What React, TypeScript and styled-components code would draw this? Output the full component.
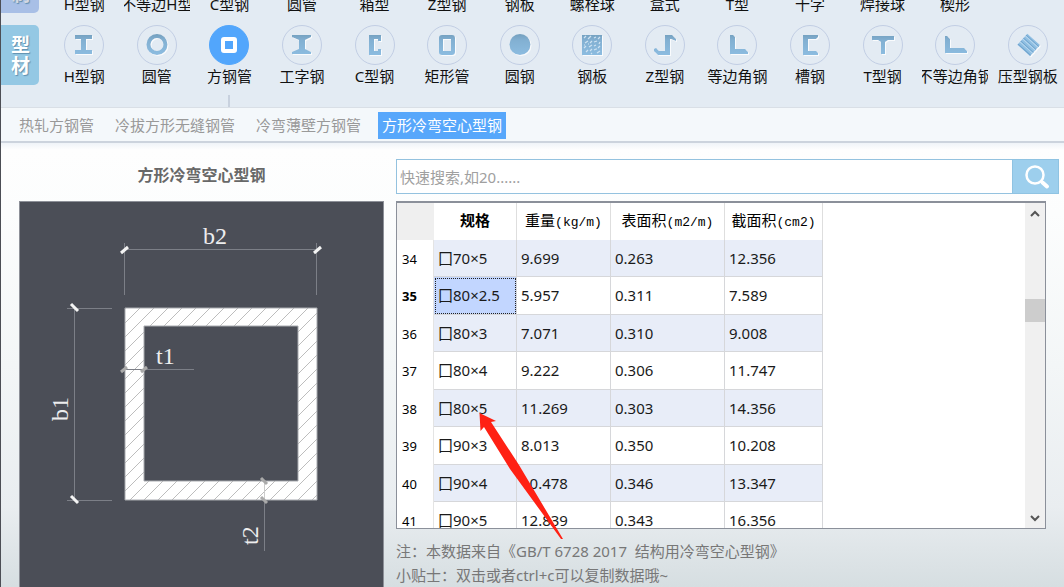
import React from "react";
import styled, { createGlobalStyle, css } from "styled-components";

const uiFont = `"Noto Sans", "Noto Sans CJK SC", sans-serif`;
const monoFont = `"Liberation Mono", "Noto Sans CJK SC", monospace`;

const GlobalStyle = createGlobalStyle`
  * { box-sizing: border-box; }
  body { margin: 0; font-family: ${uiFont}; font-size: 15px; color: #1a1a1a; }
  button, input { font: inherit; color: inherit; }
  button { border: 0; padding: 0; background: none; cursor: pointer; }
`;

const Window = styled.main`
  display: flex;
  flex-direction: column;
  height: 100vh;
  overflow: hidden;
  border-left: 1px solid #4c4e55;
`;

const Nav = styled.nav`
  display: flex;
  flex-direction: column;
  justify-content: flex-end;
  gap: 8px;
  flex: none;
  height: 107px;
  padding-bottom: 18px;
  overflow: hidden;
  background: #e3ebf3;
`;

const NavRow = styled.section`
  display: flex;
  flex: none;
  gap: 9px;
  height: 64px;
`;

const Category = styled.h2<{ $tone: string; $ink: string }>`
  display: flex;
  align-items: center;
  justify-content: center;
  flex: none;
  width: 38px;
  height: 60px;
  margin: 0;
  padding: 1px 8px 0 10px;
  border-radius: 0 5px 5px 0;
  background: ${(p) => p.$tone};
  color: ${(p) => p.$ink};
  font-size: 19px;
  font-weight: 700;
  line-height: 21px;
  text-shadow: 1px 1px 1px #5f8fae;
`;

const Items = styled.div`
  display: grid;
  grid-template-columns: repeat(14, minmax(0, 1fr));
  flex: 1;
  min-width: 0;
`;

const Item = styled.button`
  display: flex;
  position: relative;
  flex-direction: column;
  align-items: center;
  color: #111;
`;

const Circle = styled.span<{ $active?: boolean }>`
  display: flex;
  align-items: center;
  justify-content: center;
  flex: none;
  width: 40px;
  height: 40px;
  border: 1px solid ${(p) => (p.$active ? "#52a6fc" : "#c2cee4")};
  border-radius: 50%;
  background: ${(p) => (p.$active ? "#52a6fc" : "transparent")};
`;

const ItemLabel = styled.span`
  display: flex;
  justify-content: center;
  width: 66px;
  line-height: 22px;
  white-space: nowrap;
  overflow: hidden;
`;

const Pointer = styled.i`
  position: absolute;
  top: 70px;
  left: 50%;
  width: 2px;
  height: 12px;
  margin-left: -1px;
  background: #c8d1de;
`;

const Tabs = styled.div`
  display: flex;
  align-items: center;
  flex: none;
  gap: 13px;
  height: 36px;
  padding: 2px 0 0 14px;
  border-top: 1px solid #d9dfe6;
  border-bottom: 2px solid #ccd3dd;
  background: #f4f8fb;
`;

const Tab = styled.button<{ $active?: boolean }>`
  height: 27px;
  padding: 0 4px;
  color: #999;
  line-height: 27px;
  white-space: nowrap;
  ${(p) =>
    p.$active &&
    css`
      background: #57a7fb;
      color: #fff;
    `}
`;

const Content = styled.div`
  display: flex;
  flex: 1;
  gap: 12px;
  min-height: 0;
  padding: 0 5px 0 18px;
  background: linear-gradient(#eff3f8, #fefefe 7px, #fcfdfd 70px, #f3f6f7 50%, #e9edf0 82%, #d6dee1);
`;

const Preview = styled.section`
  display: flex;
  flex-direction: column;
  flex: 0 1 365px;
  min-width: 0;
`;

const PreviewTitle = styled.h1`
  flex: none;
  height: 58px;
  margin: 0;
  padding-top: 20px;
  color: #686868;
  font-size: 16px;
  font-weight: 700;
  line-height: 24px;
  text-align: center;
`;

const Drawing = styled.figure`
  flex: 1;
  min-height: 0;
  margin: 0;
  overflow: hidden;
  border: solid #8d9098;
  border-width: 1px 1px 0;
  background: #4b4e57;
  font-family: "Liberation Serif", serif;
`;

const Data = styled.section`
  display: flex;
  flex-direction: column;
  flex: 1;
  min-width: 0;
  padding-top: 16px;
`;

const Search = styled.form`
  display: flex;
  flex: none;
  height: 35px;
  margin-bottom: 7px;
`;

const SearchBox = styled.input`
  flex: 1;
  min-width: 0;
  padding: 0 3px;
  border: 1px solid #94c2df;
  border-right: 0;
  outline: 0;
  background: #fff;
  &::placeholder { color: #a0a0a0; opacity: 1; }
`;

const SearchButton = styled.button`
  display: flex;
  align-items: center;
  justify-content: center;
  width: 47px;
  padding-left: 2px;
  border: 1px solid #8fc3e2;
  background: #9dcfed;
`;

const GridArea = styled.div`
  display: flex;
  position: relative;
  flex: 1;
  min-height: 0;
  margin-right: 13px;
`;

const GridFrame = styled.div`
  display: flex;
  justify-content: space-between;
  flex: 1;
  overflow: hidden;
  border: 1px solid #8b909a;
  border-top-width: 2px;
  background: #fff;
`;

const Table = styled.table`
  align-self: flex-start;
  border-collapse: separate;
  border-spacing: 0;
  table-layout: fixed;
  width: 426px;
`;

const Row = styled.tr<{ $shaded?: boolean }>`
  height: ${(p) => (p.$shaded ? 37 : 38)}px;
  --fill: ${(p) => (p.$shaded ? "#e8edf8" : "#fff")};
`;

const Corner = styled.td`
  width: 37px;
  height: 37px;
  padding: 0;
  background: #efefef;
`;

const Head = styled.th<{ $width: number; $strong?: boolean }>`
  width: ${(p) => p.$width}px;
  height: 37px;
  padding: 3px 0 0;
  border-right: 1px solid #dedede;
  color: #000;
  font-family: ${monoFont};
  font-weight: ${(p) => (p.$strong ? 700 : 400)};
  line-height: 20px;
  white-space: nowrap;
`;

const Unit = styled.span`
  font-size: 13px;
`;

const RowHead = styled.th<{ $strong?: boolean }>`
  padding: 0 0 0 5px;
  border-right: 1px solid #e4e4e4;
  color: #000;
  font-size: 13px;
  font-weight: ${(p) => (p.$strong ? 700 : 400)};
  line-height: 20px;
  text-align: left;
`;

const Cell = styled.td<{ $selected?: boolean }>`
  padding: 0 0 1px 4px;
  border-right: 1px solid #d6d7da;
  border-bottom: 1px solid #d6d7da;
  background: var(--fill);
  line-height: 20px;
  white-space: nowrap;
  ${(p) =>
    p.$selected &&
    css`
      outline: 1px dotted #222;
      outline-offset: -2px;
      background: #c2d6ff;
    `}
`;

const Scrollbar = styled.div`
  display: flex;
  flex-direction: column;
  width: 20px;
  background: #f0f0f0;
`;

const ScrollButton = styled.button`
  display: flex;
  align-items: center;
  justify-content: center;
  flex: none;
  height: 21px;
`;

const Track = styled.div`
  flex: 1;
  padding-top: 75px;
`;

const Thumb = styled.div`
  height: 23px;
  background: #cdcdcd;
`;

const Arrow = styled.svg`
  position: absolute;
  top: 211px;
  left: 83px;
  pointer-events: none;
`;

const Notes = styled.footer`
  flex: none;
  padding-top: 10px;
  color: #777;
  line-height: 24px;
`;

const Note = styled.p`
  margin: 0;
  white-space: pre;
`;

const shapes: Record<string, React.ReactNode> = {
  hBeam: <path d="M4 5h17v4h-6v11h6v4H4v-4h6V9H4z" />,
  ring: <circle cx="13" cy="14.5" r="8.5" fill="none" stroke="url(#steel)" strokeWidth="4" />,
  iBeam: <path d="M3 5h19v2l-6 3v9l6 3v2H3v-2l7-3v-9L3 7z" />,
  cBeam: <path d="M7 5h12v6h-3V9h-4v12h4v-2h3v6H7z" />,
  rect: <rect x="7" y="7" width="12" height="16" rx="1" fill="none" stroke="url(#steel)" strokeWidth="4" />,
  disc: <circle cx="13" cy="14.5" r="10.5" />,
  plate: (
    <>
      <rect x="3" y="5" width="20" height="20" />
      <path
        d="M5 8l2-2M9 9l3-3M15 8l2-1M19 9l2-2M6 13l3-2M11 13l2-2M15 12l3-1M20 14l1-2M5 18l2-2M10 17l3-2M15 16l2-1M19 18l2-2M7 22l2-2M11 21l2-2M15 20l2-1M18 23l3-2M12 24l1-1M5 15h1M17 19h1M9 14h1"
        stroke="#cfe3f2" strokeWidth="1.2" fill="none"
      />
    </>
  ),
  zBeam: <path d="M13 5h7l4 4v2l-5-2h-1v16H6l-4-4v-2l2-1 3 3h6z" />,
  angle: <path d="M6 5h3l2 2v12h10l3 3v2H6z" />,
  channel: <path d="M6 5h15v2l-2 2h-8v12h8l2 2v2H6z" />,
  tee: <path d="M2 6h22v4h-6l-3 2v12h-4V12l-3-2H2z" />,
  unequal: <path d="M3 6h2l3 3v9h14l3 3v2H3z" />,
  sheet: (
    <g transform="rotate(42 13 15)">
      <rect x="5" y="7" width="17" height="15" fill="#8fbfe2" />
      <path d="M5 9h17M5 13h17M5 17h17M5 21h17" stroke="#6fa3cd" strokeWidth="1" />
      <path d="M5 10h17M5 14h17M5 18h17" stroke="#b9d8ef" strokeWidth="1" />
    </g>
  ),
};

function Profile({ name }: { name: string }) {
  if (name === "square") {
    return (
      <svg width="20" height="20" viewBox="0 0 20 20" aria-hidden="true">
        <rect x="4" y="4" width="12" height="12" rx="1" fill="none" stroke="#fff" strokeWidth="4" />
      </svg>
    );
  }
  return (
    <svg width="26" height="30" viewBox="0 0 26 30" fill="url(#steel)" filter="url(#bevel)" aria-hidden="true">
      {shapes[name]}
    </svg>
  );
}

const Defs = () => (
  <svg width="0" height="0" style={{ position: "absolute" }} aria-hidden="true">
    <defs>
      <linearGradient id="steel" gradientUnits="userSpaceOnUse" x1="0" y1="4" x2="0" y2="25">
        <stop offset="0" stopColor="#739fbe" />
        <stop offset="0.3" stopColor="#82b0d2" />
        <stop offset="1" stopColor="#8cbce0" />
      </linearGradient>
      <filter id="bevel">
        <feDropShadow dx="1" dy="1" stdDeviation="0.3" floodColor="#fff" floodOpacity="0.8" />
      </filter>
    </defs>
  </svg>
);

const upperRow = ["H型钢", "不等边H型", "C型钢", "圆管", "箱型", "Z型钢", "钢板", "螺栓球", "盒式", "T型", "十字", "焊接球", "楔形"];

const lowerRow: [string, string][] = [
  ["H型钢", "hBeam"],
  ["圆管", "ring"],
  ["方钢管", "square"],
  ["工字钢", "iBeam"],
  ["C型钢", "cBeam"],
  ["矩形管", "rect"],
  ["圆钢", "disc"],
  ["钢板", "plate"],
  ["Z型钢", "zBeam"],
  ["等边角钢", "angle"],
  ["槽钢", "channel"],
  ["T型钢", "tee"],
  ["不等边角钢", "unequal"],
  ["压型钢板", "sheet"],
];

const tabs = ["热轧方钢管", "冷拔方形无缝钢管", "冷弯薄壁方钢管", "方形冷弯空心型钢"];

const rows = [
  [34, "70×5", "9.699", "0.263", "12.356"],
  [35, "80×2.5", "5.957", "0.311", "7.589"],
  [36, "80×3", "7.071", "0.310", "9.008"],
  [37, "80×4", "9.222", "0.306", "11.747"],
  [38, "80×5", "11.269", "0.303", "14.356"],
  [39, "90×3", "8.013", "0.350", "10.208"],
  [40, "90×4", "10.478", "0.346", "13.347"],
  [41, "90×5", "12.839", "0.343", "16.356"],
] as const;

const SectionDrawing = () => (
  <svg width="363" height="386" viewBox="20 202 363 386" role="img" aria-label="b1 b2 t1 t2">
    <defs>
      <pattern id="hatch" width="14" height="14" patternUnits="userSpaceOnUse">
        <rect width="14" height="14" fill="#fff" />
        <path d="M-2 16L16 -2M-2 2L2 -2M12 16L16 12" stroke="#bdbdbd" strokeWidth="1" />
      </pattern>
    </defs>
    <path d="M125 308H317V500H125zM144 326V481H298V326z" fill="url(#hatch)" fillRule="evenodd" stroke="#a9abb0" strokeWidth="1" />
    <g fill="none" stroke="#7c7f87" strokeWidth="1">
      <path d="M124.5 243V295M316.5 243V295M124 249.5H317M74.5 308V500M67 308.5H112M67 500.5H112M124 369.5H194M264.5 500V551" />
      <path d="M264.5 481V500" stroke="#ccc" />
    </g>
    <g stroke="#f4f4f4" strokeWidth="3">
      <path d="M121 253L128 247M314 253L321 247M71 304L78 311M71 496L78 503" />
    </g>
    <g stroke="#aaa" strokeWidth="3">
      <path d="M121 372L127 367M141 372L147 367M261 478L267 484M261 497L267 503" />
    </g>
    <g fill="#ededee" fontSize="24">
      <text x="203" y="244">b2</text>
      <text x="156" y="364">t1</text>
      <text transform="translate(68 421) rotate(-90)">b1</text>
      <text transform="translate(258 545) rotate(-90)">t2</text>
    </g>
  </svg>
);

export default function App() {
  return (
    <Window>
      <GlobalStyle />
      <Defs />
      <Nav>
        <NavRow>
          <Category $tone="#a8bfe6" $ink="#d3d8e2">焊制</Category>
          <Items>
            {upperRow.map((label) => (
              <Item key={label} type="button">
                <Circle />
                <ItemLabel>{label}</ItemLabel>
              </Item>
            ))}
          </Items>
        </NavRow>
        <NavRow>
          <Category $tone="#94c8e4" $ink="#fff">型材</Category>
          <Items>
            {lowerRow.map(([label, icon]) => (
              <Item key={label} type="button">
                <Circle $active={icon === "square"}>
                  <Profile name={icon} />
                </Circle>
                <ItemLabel>{label}</ItemLabel>
                {icon === "square" && <Pointer />}
              </Item>
            ))}
          </Items>
        </NavRow>
      </Nav>
      <Tabs>
        {tabs.map((tab, i) => (
          <Tab key={tab} type="button" $active={i === 3}>{tab}</Tab>
        ))}
      </Tabs>
      <Content>
        <Preview>
          <PreviewTitle>方形冷弯空心型钢</PreviewTitle>
          <Drawing>
            <SectionDrawing />
          </Drawing>
        </Preview>
        <Data>
          <Search onSubmit={(e) => e.preventDefault()}>
            <SearchBox type="text" aria-label="快速搜索" placeholder="快速搜索,如20......" />
            <SearchButton type="submit" aria-label="搜索">
              <svg width="26" height="26" viewBox="0 0 26 26" fill="none" stroke="#fff" aria-hidden="true">
                <circle cx="11" cy="11" r="8.5" strokeWidth="2.5" />
                <path d="M17 17l1.5 1.5" strokeWidth="2.5" />
                <path d="M18.5 18.5L23 22.5" strokeWidth="4" strokeLinecap="round" />
              </svg>
            </SearchButton>
          </Search>
          <GridArea>
            <GridFrame>
              <Table>
                <thead>
                  <tr>
                    <Corner />
                    <Head scope="col" $width={83} $strong>规格</Head>
                    <Head scope="col" $width={94}>重量<Unit>(kg/m)</Unit></Head>
                    <Head scope="col" $width={114}>表面积<Unit>(m2/m)</Unit></Head>
                    <Head scope="col" $width={98}>截面积<Unit>(cm2)</Unit></Head>
                  </tr>
                </thead>
                <tbody>
                  {rows.map(([no, size, weight, surface, area], i) => (
                    <Row key={no} $shaded={i % 2 === 0}>
                      <RowHead scope="row" $strong={no === 35}>{no}</RowHead>
                      <Cell $selected={no === 35}>囗{size}</Cell>
                      <Cell>{weight}</Cell>
                      <Cell>{surface}</Cell>
                      <Cell>{area}</Cell>
                    </Row>
                  ))}
                </tbody>
              </Table>
              <Scrollbar>
                <ScrollButton type="button" aria-label="向上滚动">
                  <svg width="10" height="8" viewBox="0 0 10 8" fill="none" stroke="#555" strokeWidth="2" aria-hidden="true">
                    <path d="M1 6l4-4 4 4" />
                  </svg>
                </ScrollButton>
                <Track>
                  <Thumb />
                </Track>
                <ScrollButton type="button" aria-label="向下滚动">
                  <svg width="10" height="8" viewBox="0 0 10 8" fill="none" stroke="#555" strokeWidth="2" aria-hidden="true">
                    <path d="M1 2l4 4 4-4" />
                  </svg>
                </ScrollButton>
              </Scrollbar>
            </GridFrame>
            <Arrow width="86" height="130" viewBox="0 0 86 130" aria-hidden="true">
              <path d="M0.5 1L17 9L12 10L40 53L84 127L82 127L31 57L5 15L1.5 19z" fill="#ff2114" />
            </Arrow>
          </GridArea>
          <Notes>
            <Note>注：本数据来自《GB/T 6728 2017  结构用冷弯空心型钢》</Note>
            <Note>小贴士：双击或者ctrl+c可以复制数据哦~</Note>
          </Notes>
        </Data>
      </Content>
    </Window>
  );
}
